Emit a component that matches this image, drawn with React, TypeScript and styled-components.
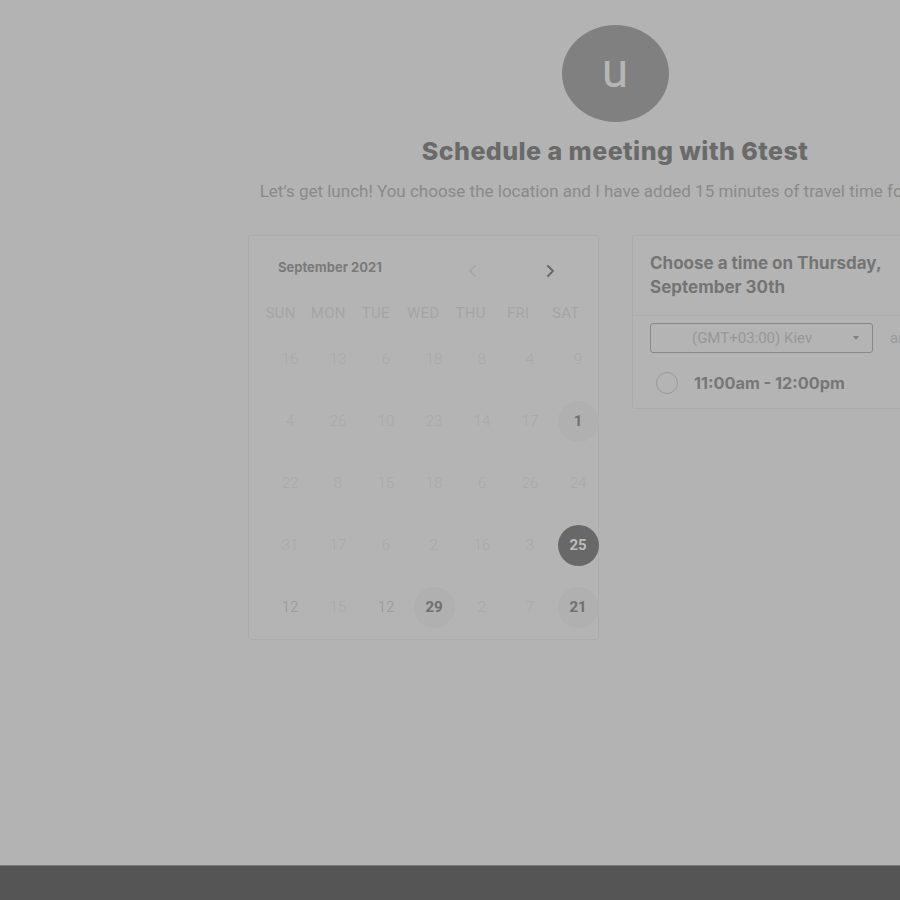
import React from "react";
import styled, { createGlobalStyle } from "styled-components";

const Global = createGlobalStyle`
  html, body { margin: 0; padding: 0; background: #b3b3b3; overflow: hidden; }
  body { font-family: "Roboto", "Liberation Sans", sans-serif; }
  #root { min-height: 900px; }
`;

const Page = styled.div`
  height: 900px;
  display: flex;
  flex-direction: column;
  overflow: hidden;
`;

const Main = styled.main`
  flex: 1;
  width: 1230px;
  display: flex;
  flex-direction: column;
  align-items: center;
  padding-top: 25px;
  box-sizing: border-box;
`;

const Avatar = styled.div`
  width: 107px;
  height: 97px;
  border-radius: 50%;
  background: #808080;
  color: #b6b6b6;
  display: flex;
  align-items: center;
  justify-content: center;
  font-family: "Roboto", sans-serif;
  font-size: 48px;
  line-height: 1;
  padding-bottom: 6px;
  box-sizing: border-box;
`;

const Title = styled.h1`
  margin: 12px 0 0;
  font-family: "Inter", "Roboto", sans-serif;
  font-weight: 800;
  font-size: 25px;
  line-height: 34px;
  color: #6a6a6a;
  letter-spacing: 0.45px;
`;

const Subtitle = styled.p`
  margin: 6px 0 0;
  font-family: "Roboto", sans-serif;
  font-size: 17px;
  line-height: 34px;
  color: #8a8a8a;
  white-space: nowrap;
`;

const Cards = styled.div`
  display: flex;
  gap: 33px;
  align-items: flex-start;
  margin-top: 27px;
`;

const CalendarCard = styled.section`
  width: 351px;
  height: 405px;
  box-sizing: border-box;
  border: 1px solid #ababab;
  border-radius: 3px;
  background: #b4b4b4;
  padding-top: 2px;
`;

const CalHeader = styled.div`
  display: flex;
  align-items: center;
  height: 60px;
  padding: 0 0 0 29px;
  box-sizing: border-box;
`;

const Month = styled.div`
  flex: 0 0 188px;
  font-family: "Inter", "Roboto", sans-serif;
  font-weight: 700;
  font-size: 13px;
  color: #7a7a7a;
  margin-top: -2px;
`;

const NavBtn = styled.button<{ $active?: boolean }>`
  flex: 0 0 14px;
  background: none;
  border: none;
  padding: 0;
  height: 14px;
  margin-right: ${(p) => (p.$active ? "0" : "63px")};
  display: flex;
  align-items: center;
  justify-content: center;
  color: ${(p) => (p.$active ? "#6a6a6a" : "#a4a4a4")};
  margin-top: 6px;
`;

const WeekRow = styled.div`
  display: grid;
  grid-template-columns: repeat(7, 47.5px);
  padding-left: 8px;
  height: 30px;
  align-items: center;
`;

const WeekDay = styled.div`
  text-align: center;
  font-size: 15px;
  color: #a4a4a4;
  letter-spacing: 0.3px;
`;

const DateGrid = styled.div`
  display: grid;
  grid-template-columns: repeat(7, 48px);
  grid-auto-rows: 62px;
  padding-left: 17px;
`;

const DateCell = styled.div`
  display: flex;
  align-items: center;
  justify-content: center;
`;

type Kind = "faded" | "dim" | "avail" | "selected";

const DateNum = styled.span<{ $kind: Kind }>`
  width: 41px;
  height: 41px;
  border-radius: 50%;
  display: flex;
  align-items: center;
  justify-content: center;
  font-size: 15px;
  font-weight: ${(p) => (p.$kind === "avail" || p.$kind === "selected" ? 700 : 300)};
  color: ${(p) =>
    p.$kind === "selected"
      ? "#bdbdbd"
      : p.$kind === "avail"
      ? "#6f6f6f"
      : p.$kind === "dim"
      ? "#969696"
      : "#a9a9a9"};
  background: ${(p) =>
    p.$kind === "selected" ? "#686868" : p.$kind === "avail" ? "#b0b0b0" : "transparent"};
`;

const TimeCard = styled.section`
  width: 350px;
  box-sizing: border-box;
  border: 1px solid #ababab;
  border-radius: 3px;
  background: #b4b4b4;
`;

const TimeHeader = styled.div`
  padding: 15px 17px 16px;
  border-bottom: 1px solid #ababab;
  font-family: "Inter", "Roboto", sans-serif;
  font-weight: 700;
  font-size: 17px;
  line-height: 24px;
  color: #747474;
  white-space: nowrap;
`;

const TimeBody = styled.div`
  padding: 7px 0 5px 17px;
`;

const ZoneRow = styled.div`
  display: flex;
  align-items: center;
  gap: 17px;
  overflow: hidden;
`;

const Select = styled.div`
  flex: 0 0 223px;
  height: 30px;
  box-sizing: border-box;
  border: 1px solid #888;
  border-radius: 3px;
  display: flex;
  align-items: center;
  padding: 0 13px 0 41px;
  font-size: 15px;
  color: #979797;
  white-space: nowrap;
`;

const SelectText = styled.span`
  flex: 1;
`;

const Caret = styled.span`
  width: 0;
  height: 0;
  border-left: 3.5px solid transparent;
  border-right: 3.5px solid transparent;
  border-top: 4px solid #808080;
`;

const Extra = styled.span`
  font-size: 15px;
  color: #9a9a9a;
  white-space: nowrap;
`;

const Slot = styled.label`
  display: flex;
  align-items: center;
  gap: 16px;
  margin-top: 10px;
  padding-left: 6px;
  height: 40px;
`;

const Radio = styled.span`
  width: 22px;
  height: 22px;
  border-radius: 50%;
  border: 1.5px solid #999;
  box-sizing: border-box;
`;

const SlotText = styled.span`
  font-family: "Inter", "Roboto", sans-serif;
  font-weight: 700;
  font-size: 16.3px;
  color: #777;
`;

const Footer = styled.footer`
  height: 34px;
  background: #555;
  border-top: 1px solid #7a7a7a;
  flex-shrink: 0;
`;

const Chevron = ({ dir }: { dir: "left" | "right" }) => (
  <svg width="12" height="14" viewBox="0 0 12 14" fill="none">
    <path
      d={dir === "left" ? "M8 2 L3 7 L8 12" : "M4 2 L9 7 L4 12"}
      stroke="currentColor"
      strokeWidth={dir === "left" ? 1.4 : 2}
      strokeLinecap="round"
      strokeLinejoin="round"
    />
  </svg>
);

const weekDays = ["SUN", "MON", "TUE", "WED", "THU", "FRI", "SAT"];

const rows: [string, Kind][][] = [
  [["16", "faded"], ["13", "faded"], ["6", "faded"], ["18", "faded"], ["8", "faded"], ["4", "faded"], ["9", "faded"]],
  [["4", "faded"], ["26", "faded"], ["10", "faded"], ["23", "faded"], ["14", "faded"], ["17", "faded"], ["1", "avail"]],
  [["22", "faded"], ["8", "faded"], ["15", "faded"], ["18", "faded"], ["6", "faded"], ["26", "faded"], ["24", "faded"]],
  [["31", "faded"], ["17", "faded"], ["6", "faded"], ["2", "faded"], ["16", "faded"], ["3", "faded"], ["25", "selected"]],
  [["12", "dim"], ["15", "faded"], ["12", "dim"], ["29", "avail"], ["2", "faded"], ["7", "faded"], ["21", "avail"]],
];

export default function App() {
  return (
    <Page>
      <Global />
      <Main>
        <Avatar>u</Avatar>
        <Title>Schedule a meeting with 6test</Title>
        <Subtitle>
          Let’s get lunch! You choose the location and I have added 15 minutes of travel time for the trip.
        </Subtitle>
        <Cards>
          <CalendarCard>
            <CalHeader>
              <Month>September 2021</Month>
              <NavBtn aria-label="Previous month">
                <Chevron dir="left" />
              </NavBtn>
              <NavBtn $active aria-label="Next month">
                <Chevron dir="right" />
              </NavBtn>
            </CalHeader>
            <WeekRow>
              {weekDays.map((d) => (
                <WeekDay key={d}>{d}</WeekDay>
              ))}
            </WeekRow>
            <DateGrid>
              {rows.flat().map(([n, k], i) => (
                <DateCell key={i}>
                  <DateNum $kind={k}>{n}</DateNum>
                </DateCell>
              ))}
            </DateGrid>
          </CalendarCard>
          <TimeCard>
            <TimeHeader>
              Choose a time on Thursday,
              <br />
              September 30th
            </TimeHeader>
            <TimeBody>
              <ZoneRow>
                <Select>
                  <SelectText>(GMT+03:00) Kiev</SelectText>
                  <Caret />
                </Select>
                <Extra>are you in another timezone?</Extra>
              </ZoneRow>
              <Slot>
                <Radio />
                <SlotText>11:00am - 12:00pm</SlotText>
              </Slot>
            </TimeBody>
          </TimeCard>
        </Cards>
      </Main>
      <Footer />
    </Page>
  );
}
